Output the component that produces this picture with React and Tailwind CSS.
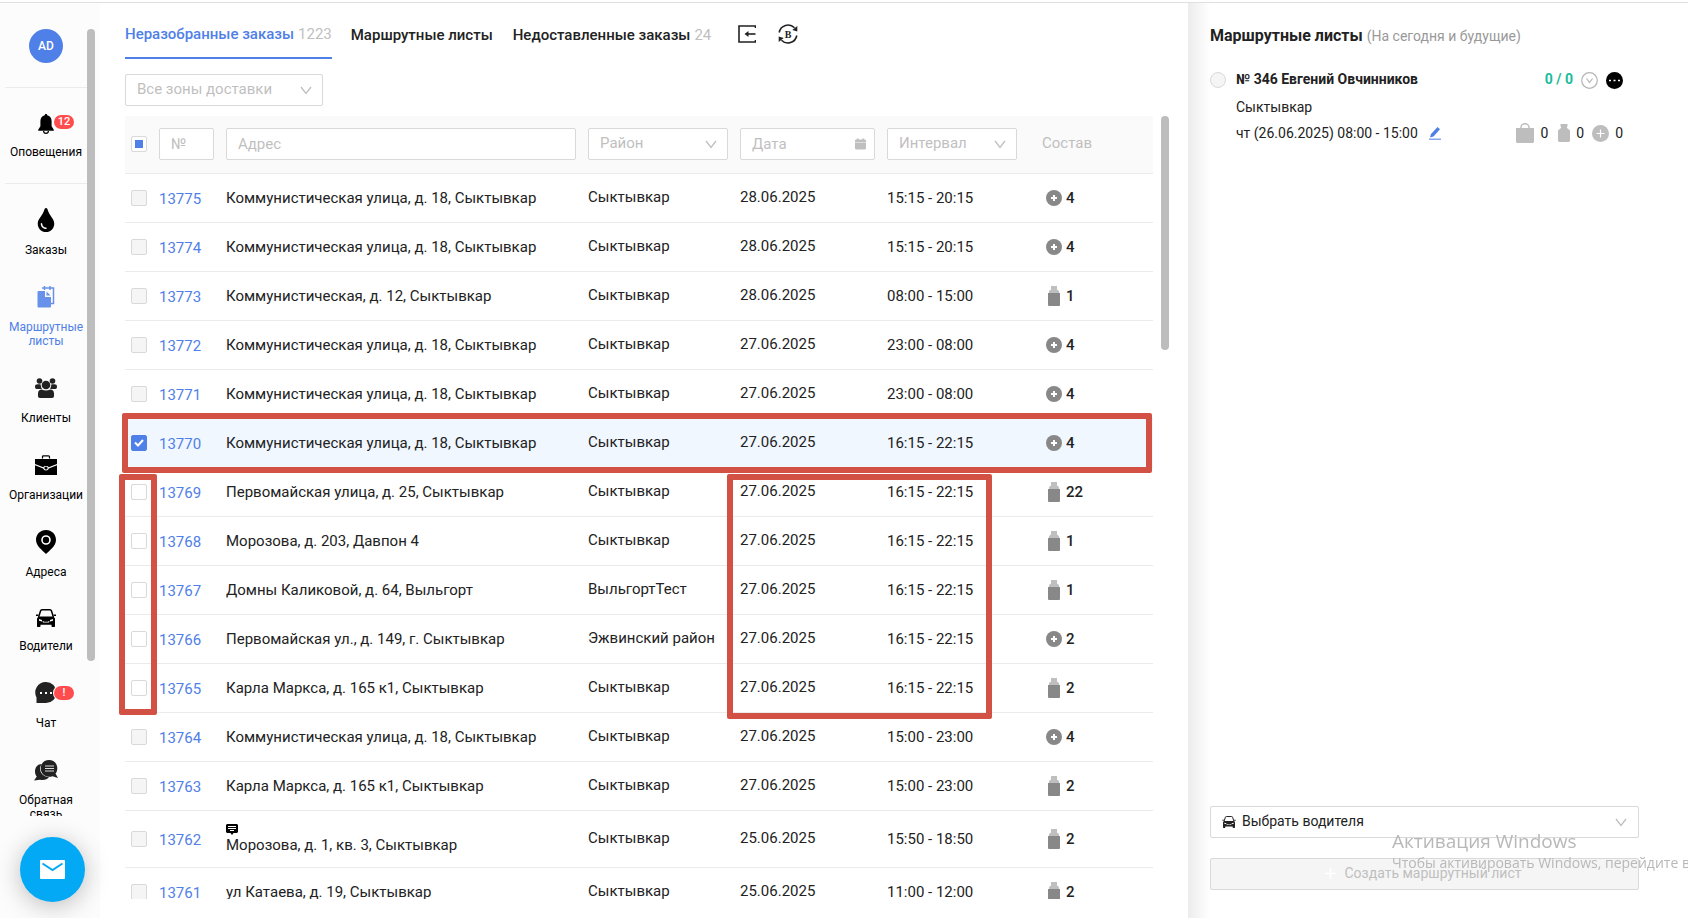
import React, { useState } from "react";
import { FaTint } from "react-icons/fa";

const ORDERS = [
    { id: 13775, address: "Коммунистическая улица, д. 18, Сыктывкар", region: "Сыктывкар", date: "28.06.2025", time: "15:15 - 20:15", kind: "plus", qty: 4 },
    { id: 13774, address: "Коммунистическая улица, д. 18, Сыктывкар", region: "Сыктывкар", date: "28.06.2025", time: "15:15 - 20:15", kind: "plus", qty: 4 },
    { id: 13773, address: "Коммунистическая, д. 12, Сыктывкар", region: "Сыктывкар", date: "28.06.2025", time: "08:00 - 15:00", kind: "bottle", qty: 1 },
    { id: 13772, address: "Коммунистическая улица, д. 18, Сыктывкар", region: "Сыктывкар", date: "27.06.2025", time: "23:00 - 08:00", kind: "plus", qty: 4 },
    { id: 13771, address: "Коммунистическая улица, д. 18, Сыктывкар", region: "Сыктывкар", date: "27.06.2025", time: "23:00 - 08:00", kind: "plus", qty: 4 },
    { id: 13770, address: "Коммунистическая улица, д. 18, Сыктывкар", region: "Сыктывкар", date: "27.06.2025", time: "16:15 - 22:15", kind: "plus", qty: 4 },
    { id: 13769, address: "Первомайская улица, д. 25, Сыктывкар", region: "Сыктывкар", date: "27.06.2025", time: "16:15 - 22:15", kind: "bottle", qty: 22 },
    { id: 13768, address: "Морозова, д. 203, Давпон 4", region: "Сыктывкар", date: "27.06.2025", time: "16:15 - 22:15", kind: "bottle", qty: 1 },
    { id: 13767, address: "Домны Каликовой, д. 64, Выльгорт", region: "ВыльгортТест", date: "27.06.2025", time: "16:15 - 22:15", kind: "bottle", qty: 1 },
    { id: 13766, address: "Первомайская ул., д. 149, г. Сыктывкар", region: "Эжвинский район", date: "27.06.2025", time: "16:15 - 22:15", kind: "plus", qty: 2 },
    { id: 13765, address: "Карла Маркса, д. 165 к1, Сыктывкар", region: "Сыктывкар", date: "27.06.2025", time: "16:15 - 22:15", kind: "bottle", qty: 2 },
    { id: 13764, address: "Коммунистическая улица, д. 18, Сыктывкар", region: "Сыктывкар", date: "27.06.2025", time: "15:00 - 23:00", kind: "plus", qty: 4 },
    { id: 13763, address: "Карла Маркса, д. 165 к1, Сыктывкар", region: "Сыктывкар", date: "27.06.2025", time: "15:00 - 23:00", kind: "bottle", qty: 2 },
    { id: 13762, address: "Морозова, д. 1, кв. 3, Сыктывкар", region: "Сыктывкар", date: "25.06.2025", time: "15:50 - 18:50", kind: "bottle", qty: 2, comment: true },
    { id: 13761, address: "ул Катаева, д. 19, Сыктывкар", region: "Сыктывкар", date: "25.06.2025", time: "11:00 - 12:00", kind: "bottle", qty: 2 },
];

// ICONS
const BellIcon = () => (
    <svg width="16" height="20" viewBox="0 0 16 20">
        <path d="M8 0c.8 0 1.200.5 1.200 1.200C12 1.800 13.600 4 13.600 7v5.200l2.200 3.600v.9H.2v-.9l2.200-3.600V7c0-3 1.600-5.200 4.400-5.800C6.800.5 7.200 0 8 0z" />
        <path d="M5.600 17a2.400 2.300 0 0 0 4.800 0" fill="none" stroke="currentColor" strokeWidth="1.200" />
    </svg>
);

const SheetsIcon = () => (
    <svg width="18" height="22" viewBox="0 0 18 22" opacity=".85">
        <path d="M5 2h11.500v15.500H14" fill="none" stroke="currentColor" strokeWidth="1.500" />
        <path d="M7.500 0v4M13 0v4" stroke="currentColor" strokeWidth="1.500" />
        <path d="M1.500 5H8v6h6v9.500a1 1 0 0 1-1 1H1.500a1 1 0 0 1-1-1V6a1 1 0 0 1 1-1z" />
        <path d="M9.500 5.500l4 4h-4z" />
    </svg>
);

const ClientsIcon = () => (
    <svg width="22" height="20" viewBox="0 0 22 20">
        <circle cx="4.500" cy="3" r="2.800" />
        <circle cx="17.500" cy="3" r="2.800" />
        <path d="M0 8.500C0 7 1 6.200 2.500 6.200h3C6 8 6 9.500 7 11H1.500C.5 11 0 10 0 8.500zM22 8.500c0-1.500-1-2.300-2.500-2.300h-3C16 8 16 9.500 15 11h5.500c1 0 1.500-1 1.500-2.500z" />
        <circle cx="11" cy="7" r="4.300" />
        <path d="M3 15.500c0-2.500 1.500-4 3.800-4 2.600 1.200 5.800 1.200 8.400 0 2.300 0 3.800 1.500 3.800 4V18c0 1.300-.7 2-2 2H5c-1.300 0-2-.7-2-2z" />
    </svg>
);

const CaseIcon = () => (
    <svg width="22" height="20" viewBox="0 0 22 20">
        <path d="M7.500 3.500V1.800c0-.7.300-1 1-1h5c.7 0 1 .3 1 1v1.700" fill="none" stroke="currentColor" strokeWidth="1.200" />
        <path d="M0 4h22v5l-8.300 3.200c-.4-.8-1.300-1.200-2.700-1.200s-2.300.4-2.700 1.200L0 9z" />
        <path d="M0 10.200l8.200 3.200c.4 1.300 1.300 2 2.800 2s2.400-.7 2.800-2l8.200-3.200V20H0z" />
        <circle cx="11" cy="13" r="1.600" />
    </svg>
);

const PinIcon = () => (
    <svg width="20" height="24" viewBox="0 0 20 24">
        <path d="M10 0C4.300 0 0 4.300 0 9.800 0 16 6 20 10 24c4-4 10-8 10-14.200C20 4.300 15.700 0 10 0z" />
        <circle cx="10" cy="10" r="4" fill="none" stroke="#fff" strokeWidth="1.600" />
    </svg>
);

const CarIcon = ({ className }) => (
    <svg className={className} viewBox="0 0 20 18" fill="currentColor">
        <path d="M2.600 8L4.600 1.800C4.800 1.200 5.200.8 6 .8h8c.8 0 1.200.4 1.400 1L17.400 8" fill="none" stroke="currentColor" strokeWidth="1.500" />
        <path d="M0 5.500h2.500L2 7H0zM20 5.500h-2.500L18 7h2z" />
        <path fillRule="evenodd" d="M2.500 7.500h15L19 9.500V17c0 .6-.3 1-1 1h-1.500c-.6 0-1-.4-1-1v-1.300h-11V17c0 .6-.4 1-1 1H2c-.7 0-1-.4-1-1V9.500zM3 10v1.800l3 .6V11zM17 10v1.800l-3 .6V11zM7 13.500h6l.5-1.500h-.8l-.5.800H7.800L7.300 12h-.8z" />
    </svg>
);

const ChatIcon = () => (
    <svg width="22" height="22" viewBox="0 0 22 22">
        <path d="M11 0a10.500 10.500 0 1 1 0 21H1.500v-5.500A10.500 10.500 0 0 1 11 0z" />
        <path d="M5 10h2v2H5zM10 10h2v2h-2zM15 10h2v2h-2z" fill="#fff" />
    </svg>
);

const FeedbackIcon = () => (
    <svg width="24" height="21" viewBox="0 0 24 21">
        <path d="M8 4C3.500 4 1 7.500 1 11.500c0 2 .6 3.600 1.800 5L0 20.500l6-.8c4 1 7.500-.5 9-2.700C9 17 6 12.500 6 8.500 6 6.500 7 5 8 4z" />
        <path d="M15 0c4.800 0 8.300 3.600 8.300 8.200 0 2.200-.6 4-1.800 5.400L24 18l-5.500-1.800c-1 .4-2.200.6-3.500.6-4.800 0-8.300-3.800-8.300-8.500S10.200 0 15 0z" />
        <path d="M11 6h9M11 8.500h9M11 11h9" stroke="#ddd" strokeWidth="1" />
    </svg>
);

const Chevron = ({ className }) => (
    <svg className={className} width="12" height="9" viewBox="0 0 12 9" fill="none" stroke="#bfbfbf" strokeWidth="1.300">
        <path d="M1 1l5 6.500L11 1" />
    </svg>
);

const PlusCircle = () => (
    <svg width="16" height="16" viewBox="0 0 16 16">
        <circle cx="8" cy="8" r="8" fill="#888" />
        <path d="M8 5v6M5 8h6" stroke="#fff" strokeWidth="2" />
    </svg>
);

const Bottle = () => (
    <svg width="12" height="20" viewBox="0 0 12 20">
        <path d="M3 0h6v3.500L11 5v2H1V5l2-1.500z" fill="#bfbfbf" />
        <path d="M0 7h12v12a1 1 0 0 1-1 1H1a1 1 0 0 1-1-1z" fill="#888" />
    </svg>
);

const NAV = [
    { label: "Заказы", icon: <FaTint size={24} /> },
    { label: "Маршрутные листы", icon: <SheetsIcon />, active: true },
    { label: "Клиенты", icon: <ClientsIcon />, soft: true },
    { label: "Организации", icon: <CaseIcon /> },
    { label: "Адреса", icon: <PinIcon /> },
    { label: "Водители", icon: <CarIcon className="w-5 h-[18px]" />, short: true },
    { label: "Чат", icon: <ChatIcon />, soft: true, badge: "!" },
    { label: "Обратная связь", icon: <FeedbackIcon />, soft: true },
];

const Badge = ({ children }) => (
    <span className="absolute left-1/2 ml-2 bottom-[5px] w-5 h-3.5 rounded-full bg-[#ff4d4f] ring-1 ring-white text-white text-[11px] leading-[14px] font-medium text-center">
        {children}
    </span>
);

const Sidebar = () => (
    <aside className="w-[100px] shrink-0 bg-[#fcfcfc] flex flex-col pt-[26px] pb-[102px]">
        <div className="flex min-h-0 flex-1">
            <nav className="w-[82px] ml-[5px] overflow-hidden text-black">
                <button className="block mx-auto size-[34px] rounded-full bg-[#4f80e8] text-white text-xs font-medium">AD</button>
                <a href="#notifications" className="flex flex-col items-center mt-6 border-y border-[#ebebeb] h-[97px] pt-[26px]">
                    <span className="relative h-5"><BellIcon /><Badge>12</Badge></span>
                    <span className="mt-[11px] text-xs leading-[14px]">Оповещения</span>
                </a>
                <div className="pt-6">
                    {NAV.map(item => (
                        <a key={item.label} href="#section"
                            className={`flex flex-col items-center pb-7 ${item.active ? "text-[#4f80e8]" : "text-black"}`}>
                            <span className={`relative flex items-center fill-current ${item.short ? "h-[21px]" : "h-6"} ${item.soft ? "text-[#222]" : ""}`}>
                                {item.icon}
                                {item.badge && <Badge>{item.badge}</Badge>}
                            </span>
                            <span className="mt-[11px] text-xs leading-[14px] text-center">{item.label}</span>
                        </a>
                    ))}
                </div>
            </nav>
            <div className="w-2 h-[632px] rounded-full bg-[#bdbdbd]"></div>
        </div>
    </aside>
);

const Tick = ({ label, checked, partial, disabled, onChange }) => (
    <span className="grid size-4 place-items-center">
        <input type="checkbox" aria-label={label} checked={checked} disabled={disabled} onChange={onChange}
            className="[grid-area:1/1] appearance-none size-4 rounded-xs border border-[#d9d9d9] bg-white checked:bg-[#4f80e8] checked:border-[#4f80e8] disabled:bg-[#f5f5f5]" />
        {partial && <span className="[grid-area:1/1] size-2 bg-[#4f80e8] pointer-events-none"></span>}
        {checked && (
            <svg className="[grid-area:1/1] pointer-events-none" width="10" height="8" viewBox="0 0 10 8" fill="none" stroke="#fff" strokeWidth="2">
                <path d="M1 3.500L4 6.500L9 1" />
            </svg>
        )}
    </span>
);

const Filter = ({ label }) => (
    <div className="relative">
        <select aria-label={label} className="block w-full h-8 pl-[11px] pr-7 pb-0.5 appearance-none rounded-xs border border-[#d9d9d9] bg-white text-[15px] text-[#bfbfbf] font-normal">
            <option>{label}</option>
        </select>
        <Chevron className="absolute right-[11px] top-3 pointer-events-none" />
    </div>
);

const INPUT = "block w-full h-8 px-[11px] rounded-xs border border-[#d9d9d9] bg-white text-[15px] font-normal placeholder:text-[#bfbfbf]";

const OrdersTable = () => {
    const [selected, setSelected] = useState([13770]);

    const toggle = (id) => {
        setSelected(selected.includes(id) ? selected.filter(x => x !== id) : [...selected, id]);
    };

    // only orders of the same date and interval go in one sheet
    const first = ORDERS.find(o => o.id === selected[0]);
    const canJoin = (o) => !first || (o.date === first.date && o.time === first.time);

    return (
        <table className="w-full table-fixed border-collapse text-[15px] leading-5">
            <colgroup>
                <col className="w-7" />
                <col className="w-[67px]" />
                <col />
                <col className="w-[152px]" />
                <col className="w-[147px]" />
                <col className="w-[142px]" />
                <col className="w-[130px]" />
            </colgroup>
            <thead className="bg-[#fafafa]">
                <tr className="h-[57px] border-b border-[#ebebeb] text-left align-top">
                    <th className="pl-1.5 pt-5"><Tick label="Выбрать все" partial onChange={() => {}} /></th>
                    <th className="px-1.5 pt-3"><input aria-label="Номер" placeholder="№" className={INPUT} /></th>
                    <th className="px-1.5 pt-3"><input aria-label="Адрес" placeholder="Адрес" className={INPUT} /></th>
                    <th className="px-1.5 pt-3"><Filter label="Район" /></th>
                    <th className="px-1.5 pt-3">
                        <div className="relative">
                            <input aria-label="Дата" placeholder="Дата" className={INPUT} />
                            <svg className="absolute right-[9px] top-2.5" width="11" height="12" viewBox="0 0 12 12" fill="#bfbfbf">
                                <path d="M1 1h1V0h2v1h4V0h2v1h1l1 1v2H0V2zM0 4.500h12V11l-1 1H1l-1-1z" />
                            </svg>
                        </div>
                    </th>
                    <th className="px-1.5 pt-3"><Filter label="Интервал" /></th>
                    <th className="pl-[19px] pt-[17px] font-normal text-[#bfbfbf]">Состав</th>
                </tr>
            </thead>
            <tbody>
                {ORDERS.map(order => {
                    const isOn = selected.includes(order.id);
                    return (
                        <tr key={order.id}
                            className={`border-b border-[#ebebeb] ${order.comment ? "h-[57px]" : "h-[49px]"} ${isOn ? "bg-[#f0f7ff]" : ""}`}>
                            <td className="pl-1.5"><Tick label={`Заказ ${order.id}`} checked={isOn} disabled={!canJoin(order)} onChange={() => toggle(order.id)} /></td>
                            <td className="px-1.5 pt-0.5"><a href="#order" className="text-[#4f80e8]">{order.id}</a></td>
                            <td className="px-1.5">
                                {order.comment && (
                                    <svg className="mt-0.5" width="12" height="11" viewBox="0 0 12 11">
                                        <path d="M1 0h10l1 1v7l-1 1H7.500L6 11 4.500 9H1L0 8V1z" />
                                        <path d="M2 2.500h8M2 4.500h8M4 6.500h4" stroke="#fff" />
                                    </svg>
                                )}
                                {order.address}
                            </td>
                            <td className="px-1.5 pb-0.5 whitespace-nowrap">{order.region}</td>
                            <td className="px-1.5 pb-0.5">{order.date}</td>
                            <td className="px-1.5">{order.time}</td>
                            <td className="pl-[23px]">
                                <span className="flex items-center gap-1 font-medium">
                                    <span className="w-4 flex justify-center">{order.kind === "plus" ? <PlusCircle /> : <Bottle />}</span>
                                    {order.qty}
                                </span>
                            </td>
                        </tr>
                    );
                })}
            </tbody>
        </table>
    );
};

const Main = () => (
    <main className="flex-1 min-w-0 flex flex-col pl-[25px] pr-[19px] pb-[19px]">
        <div className="flex items-start h-14 text-[15px] leading-5 font-medium whitespace-nowrap">
            <button className="h-14 pt-[21px] flex text-[#4f80e8] border-b-2 border-[#4f80e8]">
                Неразобранные заказы<span className="ml-1 font-normal text-[#bfbfbf]">1223</span>
            </button>
            <button className="ml-[19px] mt-[22px]">Маршрутные листы</button>
            <button className="ml-5 mt-[22px]">
                Недоставленные заказы<span className="ml-1 font-normal text-[#bfbfbf]">24</span>
            </button>
            <button aria-label="Импорт" className="ml-[27px] mt-[22px]">
                <svg width="18" height="18" viewBox="0 0 18 18" fill="none" stroke="currentColor" strokeWidth="1.600">
                    <path d="M17.500 3V1H1v16h16.500v-2" />
                    <path d="M17.500 9H8" />
                    <path d="M6.500 9l4-3v6z" fill="currentColor" stroke="none" />
                </svg>
            </button>
            <button aria-label="Обновить" className="ml-[22px] mt-[21px]">
                <svg width="20" height="20" viewBox="0 0 20 20" fill="none" stroke="currentColor" strokeWidth="1.600">
                    <path d="M1.200 8.500A9 9 0 0 1 16.500 3.800M18.800 11.500A9 9 0 0 1 3.500 16.200" />
                    <path d="M19.300 2v5.500l-5-1.500zM.7 18v-5.500l5 1.500z" fill="currentColor" stroke="none" />
                    <text x="10" y="13.500" textAnchor="middle" fontSize="10" className="font-['Liberation_Serif',serif] font-bold" fill="currentColor" stroke="none">B</text>
                </svg>
            </button>
        </div>

        <div className="w-[198px] mt-[15px]"><Filter label="Все зоны доставки" /></div>

        <div className="relative flex flex-1 min-h-0 gap-2 mt-2.5">
            <div className="flex-1 min-w-0 overflow-hidden">
                <OrdersTable />
            </div>
            <div className="w-2 h-[234px] rounded-full bg-[#bdbdbd]"></div>

            {/* marker frames over the table */}
            <div className="absolute -left-[3px] right-[17px] top-[297px] h-[60px] rounded-xs border-6 border-[#d35144] pointer-events-none"></div>
            <div className="absolute -left-1.5 w-[38px] top-[358px] h-[241px] rounded-xs border-6 border-[#d35144] pointer-events-none"></div>
            <div className="absolute right-[177px] w-[265px] top-[358px] h-[245px] rounded-xs border-6 border-[#d35144] pointer-events-none"></div>
        </div>
    </main>
);

const RoutePanel = () => (
    <section className="w-[500px] shrink-0 flex flex-col pl-[22px] pr-[49px] pb-7 bg-linear-to-r from-[#ececec] to-white to-[22px]">
        <h2 className="mt-[23px] text-base leading-5 font-bold whitespace-nowrap">
            Маршрутные листы <span className="text-sm font-normal text-[#999]">(На сегодня и будущие)</span>
        </h2>

        <div className="flex gap-2.5 mt-[23px] pr-4 text-sm leading-5">
            <input type="radio" id="route-346" name="route" disabled className="appearance-none size-4 mt-[3px] rounded-full border border-[#d9d9d9] bg-[#f5f5f5]" />
            <div className="flex-1">
                <div className="flex items-center">
                    <label htmlFor="route-346" className="flex-1 font-bold">№ 346 Евгений Овчинников</label>
                    <span className="font-bold text-[#1abc9c]">0 / 0</span>
                    <button aria-label="Развернуть" className="ml-2 pt-0.5">
                        <svg width="17" height="17" viewBox="0 0 17 17" fill="none" stroke="#b5b5b5" strokeWidth="1.200">
                            <circle cx="8.500" cy="8.500" r="7.800" />
                            <path d="M5.500 6.500l3 4 3-4" />
                        </svg>
                    </button>
                    <button aria-label="Ещё" className="ml-2 pt-0.5">
                        <svg width="17" height="17" viewBox="0 0 17 17">
                            <circle cx="8.500" cy="8.500" r="8.500" />
                            <path d="M3 7.800h2v1.500H3zM7.500 7.800h2v1.500h-2zM12 7.800h2v1.500h-2z" fill="#fff" />
                        </svg>
                    </button>
                </div>
                <p className="mt-2">Сыктывкар</p>
                <div className="flex items-center mt-1.5">
                    <span>чт (26.06.2025) 08:00 - 15:00</span>
                    <button aria-label="Изменить" className="ml-[11px]">
                        <svg width="12" height="13" viewBox="0 0 12 13" fill="#4f80e8">
                            <path d="M8.500 0L11 2.200 4.500 9.500 1 10.500l1-3.500z" />
                            <path d="M0 11.500h12V13H0z" opacity=".7" />
                        </svg>
                    </button>
                    <span className="flex items-center gap-1.5 ml-auto">
                        <svg width="18" height="20" viewBox="0 0 18 20" fill="#bdbdbd">
                            <path d="M0 5h18v14l-1 1H1l-1-1z" />
                            <path d="M5 6V4.500a4 3.800 0 0 1 8 0V6" fill="none" stroke="#bdbdbd" strokeWidth="1.500" />
                        </svg>
                        0
                    </span>
                    <span className="flex items-center gap-1.5 ml-2.5">
                        <svg width="12" height="18" viewBox="0 0 12 18" fill="#bdbdbd">
                            <path d="M2.500 0h7v2.500H9V4l3 2.500V17l-1 1H1l-1-1V6.500L3 4V2.500h-.5z" />
                        </svg>
                        0
                    </span>
                    <span className="flex items-center gap-1.5 ml-2">
                        <svg width="17" height="17" viewBox="0 0 17 17">
                            <circle cx="8.500" cy="8.500" r="8.500" fill="#bdbdbd" />
                            <path d="M8.500 4.500v8M4.500 8.500h8" stroke="#fff" strokeWidth="1.200" />
                        </svg>
                        0
                    </span>
                </div>
            </div>
        </div>

        <div className="relative mt-auto">
            <select aria-label="Водитель" className="block w-full h-8 pl-[31px] pb-0.5 appearance-none rounded-xs border border-[#d9d9d9] bg-white text-sm">
                <option>Выбрать водителя</option>
            </select>
            <CarIcon className="absolute left-3 top-2.5 w-3.5 h-3" />
            <Chevron className="absolute right-3 top-3" />
        </div>
        <button disabled className="flex items-center justify-center gap-2 h-8 mt-5 pb-0.5 pr-0.5 rounded-xs border border-[#d9d9d9] bg-[#f5f5f5] text-[#bfbfbf] text-sm">
            <svg width="11" height="11" viewBox="0 0 11 11" stroke="#fff" strokeWidth="1.500">
                <path d="M5.500 0v11M0 5.500h11" />
            </svg>
            Создать маршрутный лист
        </button>
    </section>
);

export default function App() {
    return (
        <div className="h-screen pt-0.5 overflow-hidden bg-white text-[#222] font-[Roboto,sans-serif]">
            <div className="flex h-full border-t border-[#e0e0e0]">
                <Sidebar />
                <Main />
                <RoutePanel />
            </div>

            <button aria-label="Написать нам" className="fixed left-5 bottom-4 size-[65px] rounded-full bg-[#03a9f4] flex items-center justify-center shadow-[0_4px_24px_rgba(0,0,0,0.25)]">
                <svg width="25" height="19" viewBox="0 0 25 19">
                    <rect width="25" height="19" rx="1" fill="#fff" />
                    <path d="M2.500 3.500l10 6.500 10-6.500" fill="none" stroke="#03a9f4" strokeWidth="2" />
                </svg>
            </button>

            {/* system notice */}
            <div className="fixed right-0 bottom-[45px] w-[296px] overflow-hidden whitespace-nowrap text-[#b8b8b8] font-['Open_Sans',sans-serif] pointer-events-none">
                <p className="text-[19px] leading-6">Активация Windows</p>
                <p className="text-sm leading-5">Чтобы активировать Windows, перейдите в раздел</p>
            </div>
        </div>
    );
}
